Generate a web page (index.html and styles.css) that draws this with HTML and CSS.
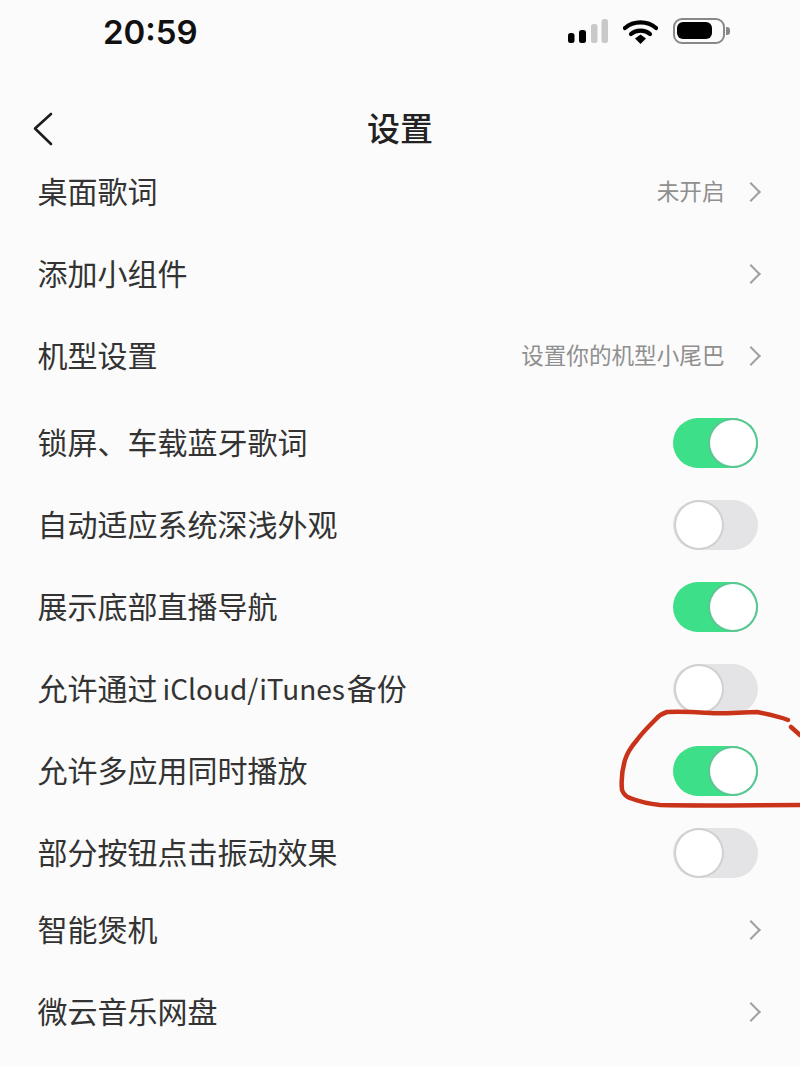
FILE: index.html
```html
<!DOCTYPE html>
<html lang="zh-CN">
<head>
    <meta charset="UTF-8">
    <meta name="viewport" content="width=device-width, initial-scale=1.0">
    <title>设置</title>
    <link rel="stylesheet" href="styles.css">
</head>
<body>
    <div class="status-bar">
        <div class="time">20:59</div>
        <div class="status-icons">
            <svg class="signal" width="40" height="24" viewBox="0 0 40 24">
                <rect x="0" y="14" width="6.500" height="10" rx="2.500" fill="#000"/>
                <rect x="11" y="11" width="7" height="13" rx="2.500" fill="#000"/>
                <rect x="23" y="5" width="6.500" height="19" rx="2.500" fill="#c9c9c9"/>
                <rect x="33.500" y="0" width="6.500" height="24" rx="2.500" fill="#c9c9c9"/>
            </svg>
            <svg class="wifi" width="35" height="25" viewBox="0 0 35 25">
                <path d="M2 9C10.500 1.500 24.500 1.500 33 9" fill="none" stroke="#000" stroke-width="4.200" stroke-linecap="round"/>
                <path d="M8 15C13 10.500 22 10.500 27 15" fill="none" stroke="#000" stroke-width="4.200" stroke-linecap="round"/>
                <path d="M12 19.500L17.500 15.500L23 19.500L17.500 25Z" fill="#000"/>
            </svg>
            <div class="battery">
                <div class="battery-body"><div class="battery-level"></div></div>
                <div class="battery-cap"></div>
            </div>
        </div>
    </div>

    <div class="nav-bar">
        <svg class="back" width="22" height="34" viewBox="0 0 22 34">
            <path d="M19 2L3 16.500L19 32" fill="none" stroke="#1c1c1c" stroke-width="2.600" stroke-linecap="round" stroke-linejoin="round"/>
        </svg>
        <div class="nav-title">设置</div>
    </div>

    <div class="list">
        <div class="row">
            <span class="label">桌面歌词</span>
            <span class="value">未开启</span>
            <span class="chevron"></span>
        </div>
        <div class="row">
            <span class="label">添加小组件</span>
            <span class="chevron"></span>
        </div>
        <div class="row">
            <span class="label">机型设置</span>
            <span class="value">设置你的机型小尾巴</span>
            <span class="chevron"></span>
        </div>
    </div>

    <div class="list list-toggles">
        <div class="row">
            <span class="label">锁屏、车载蓝牙歌词</span>
            <span class="toggle on"><span class="knob"></span></span>
        </div>
        <div class="row">
            <span class="label">自动适应系统深浅外观</span>
            <span class="toggle"><span class="knob"></span></span>
        </div>
        <div class="row">
            <span class="label">展示底部直播导航</span>
            <span class="toggle on"><span class="knob"></span></span>
        </div>
        <div class="row">
            <span class="label">允许通过<span class="latin">iCloud/iTunes</span>备份</span>
            <span class="toggle"><span class="knob"></span></span>
        </div>
        <div class="row">
            <span class="label">允许多应用同时播放</span>
            <span class="toggle on"><span class="knob"></span></span>
        </div>
        <div class="row">
            <span class="label">部分按钮点击振动效果</span>
            <span class="toggle"><span class="knob"></span></span>
        </div>
    </div>

    <div class="list">
        <div class="row">
            <span class="label">智能煲机</span>
            <span class="chevron"></span>
        </div>
        <div class="row">
            <span class="label">微云音乐网盘</span>
            <span class="chevron"></span>
        </div>
    </div>

    <!-- red marker scribble drawn over the screenshot -->
    <svg class="scribble" width="800" height="1067" viewBox="0 0 800 1067">
        <path d="M788 720C778 716 767 714 757 712C742 712 725 714 710 713C695 712 680 711 667 712C660 714 658 717 655 720C648 727 642 733 637 740C631 747 627 753 625 760C622 770 621 780 622 790C624 795 627 797 630 798C640 802 650 804 660 805C700 806 760 805 800 805" fill="none" stroke="#c9331a" stroke-width="4.500" stroke-linecap="round" stroke-linejoin="round"/>
        <path d="M791 727L800 735" fill="none" stroke="#c9331a" stroke-width="4.500" stroke-linecap="round"/>
    </svg>
</body>
</html>
```

FILE: styles.css
```css
body {
    margin: 0;
    height: 1067px;
    overflow: hidden;
    position: relative;
    background-color: #fbfbfb;
    color: #333;
    font-family: "Noto Sans CJK SC", "Noto Sans", sans-serif;
}

.status-bar {
    height: 64px;
    display: flex;
    align-items: center;
    justify-content: space-between;
    padding: 0 70px 0 103px;
}

.time {
    font-family: Inter, "Liberation Sans", sans-serif;
    font-size: 33px;
    font-weight: 600;
    color: #111;
}

.status-icons {
    display: flex;
    align-items: center;
    gap: 15px;
    padding-bottom: 2px;
}

.battery {
    display: flex;
    align-items: center;
    gap: 1px;
}

.battery-body {
    width: 52px;
    height: 26px;
    padding: 2px;
    box-sizing: border-box;
    border: 2.500px solid #888;
    border-radius: 9px;
}

.battery-level {
    width: 35px;
    height: 17px;
    background-color: #000;
    border-radius: 6px;
}

.battery-cap {
    width: 4px;
    height: 8px;
    background-color: #888;
    border-radius: 0 3px 3px 0;
}

.nav-bar {
    height: 87px;
    padding-top: 40px;
    box-sizing: border-box;
    display: flex;
    align-items: flex-start;
    justify-content: center;
    position: relative;
}

.back {
    position: absolute;
    left: 32px;
    top: 48px;
}

.nav-title {
    font-size: 33px;
    line-height: 46px;
    font-weight: 500;
    color: #222;
}

.list {
    display: flex;
    flex-direction: column;
}

.list-toggles {
    margin-top: 5px;
    margin-bottom: -5px;
}

.row {
    height: 82px;
    display: flex;
    align-items: center;
    padding: 0 38px 0 38px;
}

.label {
    flex: 1;
    font-size: 30px;
    color: #333;
    white-space: nowrap;
    padding-bottom: 4px;
    margin-left: -0.500px;
}

.latin {
    font-size: 28px;
    margin: 0 2px 0 5px;
}

.value {
    font-size: 22.600px;
    color: #8f8f8f;
    margin-right: 19px;
    padding-bottom: 4px;
}

.chevron {
    width: 12px;
    height: 12px;
    margin-right: 4.500px;
    border-top: 2.500px solid #a0a0a0;
    border-right: 2.500px solid #a0a0a0;
    transform: rotate(45deg);
}

.toggle {
    width: 85px;
    height: 50px;
    margin-right: 4px;
    padding: 2px 2px 2px 3px;
    box-sizing: border-box;
    display: flex;
    border-radius: 25px;
    background-color: #e4e4e6;
}

.toggle.on {
    justify-content: flex-end;
    background-color: #3ddf88;
}

.knob {
    width: 46px;
    height: 46px;
    border-radius: 50%;
    background-color: #fff;
    box-shadow: 0 0 0 2px #d0d0d0;
}

.toggle.on .knob {
    box-shadow: 0 0 0 2px #5cc693;
}

.scribble {
    position: absolute;
    top: 0;
    left: 0;
    pointer-events: none;
}
```
